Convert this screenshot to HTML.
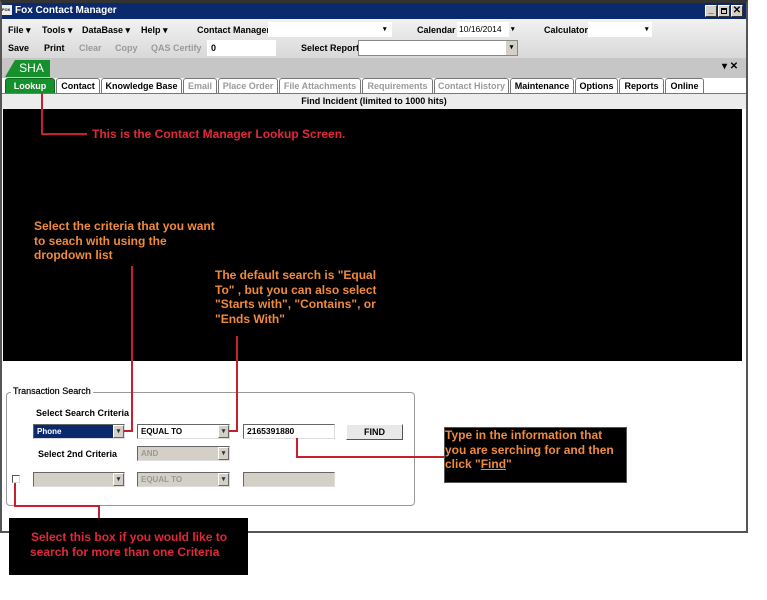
<!DOCTYPE html>
<html><head><meta charset="utf-8"><style>
*{margin:0;padding:0;box-sizing:border-box}
body{width:767px;height:600px;background:#fff;position:relative;overflow:hidden;font-family:"Liberation Sans",Arial,sans-serif;font-weight:bold;font-size:9px;color:#000}
.a{position:absolute}
.t{position:absolute;white-space:nowrap}
.red{background:#c81e2d;position:absolute}
.tab{position:absolute;top:78px;height:15px;border:1px solid #777;border-bottom:none;background:#fff;text-align:center;line-height:14px;font-size:9px;border-radius:3px 3px 0 0}
.dis{color:#9a9a9a}
.dd{position:absolute;height:15px;border:1px solid #666;border-right-color:#ddd;border-bottom-color:#ddd;background:#fff;font-size:8px;line-height:13px;padding-left:3px}
.dd i{position:absolute;right:0;top:0;width:11px;height:13px;background:#d4d0c8;border:1px solid #fff;border-right-color:#666;border-bottom-color:#666;font-style:normal;font-size:7px;line-height:11px;text-align:center;color:#333}
.g{background:#d4d0c8;color:#999}
.ann{position:absolute;color:#f08a3c;font-size:12px;line-height:14.5px;font-weight:bold;white-space:nowrap}
</style></head><body>
<div class="a" style="left:0;top:0;width:748px;height:533px;border:2px solid #555;border-top:3px solid #333;background:#fff"></div>
<div class="a" style="left:2px;top:3px;width:744px;height:16px;background:#0b2a6e"></div>
<div class="a" style="left:2px;top:5px;width:10px;height:10px;background:#eee;font-size:4px;line-height:10px;color:#000">FOX</div>
<div class="t" style="left:15px;top:5px;color:#fff;font-size:10px">Fox Contact Manager</div>
<div class="a" style="left:705px;top:5px;width:12px;height:12px;background:#d4d0c8;border:1px solid #fff;border-right-color:#333;border-bottom-color:#333;font-size:9px;line-height:9px;text-align:center">_</div>
<div class="a" style="left:718px;top:5px;width:12px;height:12px;background:#d4d0c8;border:1px solid #fff;border-right-color:#333;border-bottom-color:#333"><div style="margin:2px;width:6px;height:6px;border:1px solid #000;border-top-width:2px"></div></div>
<div class="a" style="left:731px;top:5px;width:12px;height:12px;background:#d4d0c8;border:1px solid #fff;border-right-color:#333;border-bottom-color:#333;font-size:10px;line-height:10px;text-align:center">✕</div>
<div class="a" style="left:2px;top:19px;width:744px;height:39px;background:linear-gradient(#f2f2f2,#d8d8d8)"></div>
<div class="t" style="left:8px;top:25px">File ▾</div>
<div class="t" style="left:42px;top:25px">Tools ▾</div>
<div class="t" style="left:82px;top:25px">DataBase ▾</div>
<div class="t" style="left:141px;top:25px">Help ▾</div>
<div class="t" style="left:197px;top:25px">Contact Manager</div>
<div class="a" style="left:268px;top:22px;width:124px;height:15px;background:#fff"></div>
<div class="t" style="left:383px;top:25px;font-size:7px">▾</div>
<div class="t" style="left:417px;top:25px">Calendar</div>
<div class="a" style="left:457px;top:22px;width:52px;height:15px;background:#fff;font-weight:normal;font-size:8.5px;line-height:15px;padding-left:2px">10/16/2014</div>
<div class="t" style="left:511px;top:25px;font-size:7px">▾</div>
<div class="t" style="left:544px;top:25px">Calculator</div>
<div class="a" style="left:588px;top:22px;width:64px;height:15px;background:#fff"></div>
<div class="t" style="left:645px;top:25px;font-size:7px">▾</div>
<div class="t" style="left:8px;top:43px">Save</div>
<div class="t" style="left:44px;top:43px">Print</div>
<div class="t dis" style="left:79px;top:43px">Clear</div>
<div class="t dis" style="left:115px;top:43px">Copy</div>
<div class="t dis" style="left:151px;top:43px">QAS Certify</div>
<div class="a" style="left:207px;top:40px;width:69px;height:16px;background:#fff;line-height:16px;padding-left:4px">0</div>
<div class="t" style="left:301px;top:43px">Select Report</div>
<div class="a" style="left:358px;top:40px;width:160px;height:16px;background:#fff;border:1px solid #888"><i style="position:absolute;right:0;top:0;width:11px;height:14px;background:#d4d0c8;font-style:normal;font-size:7px;text-align:center;line-height:14px">▾</i></div>
<div class="a" style="left:2px;top:58px;width:744px;height:20px;background:#c6c6c6"></div>
<div class="a" style="left:5px;top:60px;width:45px;height:17px;background:#15902c;clip-path:polygon(10px 0,100% 0,100% 100%,0 100%);color:#fff;font-size:12px;font-weight:normal;text-align:center;line-height:17px;padding-left:8px">SHA</div>
<div class="t" style="left:722px;top:61px;font-size:10px">▾ ✕</div>
<div class="tab" style="left:5px;width:50px;background:#15902c;color:#fff;border-color:#0c6a1e">Lookup</div>
<div class="tab" style="left:56px;width:44px">Contact</div>
<div class="tab" style="left:101px;width:81px">Knowledge Base</div>
<div class="tab dis" style="left:183px;width:34px">Email</div>
<div class="tab dis" style="left:218px;width:60px">Place Order</div>
<div class="tab dis" style="left:279px;width:82px">File Attachments</div>
<div class="tab dis" style="left:362px;width:71px">Requirements</div>
<div class="tab dis" style="left:434px;width:75px">Contact History</div>
<div class="tab" style="left:510px;width:64px">Maintenance</div>
<div class="tab" style="left:575px;width:43px">Options</div>
<div class="tab" style="left:619px;width:45px">Reports</div>
<div class="tab" style="left:665px;width:39px">Online</div>
<div class="a" style="left:2px;top:93px;width:744px;height:16px;background:#ececec;border-top:1px solid #777;text-align:center;line-height:15px">Find Incident (limited to 1000 hits)</div>
<div class="a" style="left:3px;top:109px;width:739px;height:252px;background:#000"></div>
<div class="red" style="left:41px;top:93px;width:2px;height:42px"></div>
<div class="red" style="left:41px;top:133px;width:46px;height:2px"></div>
<div class="t" style="left:92px;top:127px;color:#e0283a;font-size:12px">This is the Contact Manager Lookup Screen.</div>
<div class="ann" style="left:34px;top:219px">Select the criteria that you want<br>to seach with using the<br>dropdown list</div>
<div class="ann" style="left:215px;top:268px">The default search is "Equal<br>To" , but you can also select<br>"Starts with", "Contains", or<br>"Ends With"</div>
<div class="a" style="left:6px;top:392px;width:409px;height:114px;border:1px solid #999;border-radius:4px"></div>
<div class="t" style="left:11px;top:386px;background:#fff;padding:0 2px;font-weight:normal;font-size:9px;-webkit-text-stroke:0.2px #000">Transaction Search</div>
<div class="t" style="left:36px;top:408px">Select Search Criteria</div>
<div class="dd" style="left:33px;top:424px;width:92px;background:#0b2a6e;color:#fff">Phone<i>▾</i></div>
<div class="dd" style="left:137px;top:424px;width:93px">EQUAL TO<i>▾</i></div>
<div class="dd" style="left:243px;top:424px;width:92px;font-size:8.5px">2165391880</div>
<div class="a" style="left:346px;top:424px;width:57px;height:16px;background:#e8e8e8;border:1px solid #fff;border-right-color:#555;border-bottom-color:#555;text-align:center;line-height:14px;font-size:9px">FIND</div>
<div class="t" style="left:38px;top:449px">Select 2nd Criteria</div>
<div class="dd g" style="left:137px;top:446px;width:93px">AND<i>▾</i></div>
<div class="a" style="left:12px;top:475px;width:8px;height:8px;border:1px solid #555;border-right-color:#ddd;border-bottom-color:#ddd;background:#fff"></div>
<div class="dd g" style="left:33px;top:472px;width:92px"><i>▾</i></div>
<div class="dd g" style="left:137px;top:472px;width:93px">EQUAL TO<i>▾</i></div>
<div class="dd g" style="left:243px;top:472px;width:92px"></div>
<div class="red" style="left:131px;top:266px;width:2px;height:166px"></div>
<div class="red" style="left:124px;top:430px;width:9px;height:2px"></div>
<div class="red" style="left:236px;top:336px;width:2px;height:96px"></div>
<div class="red" style="left:229px;top:430px;width:9px;height:2px"></div>
<div class="red" style="left:296px;top:438px;width:2px;height:20px"></div>
<div class="red" style="left:296px;top:456px;width:148px;height:2px"></div>
<div class="red" style="left:14px;top:483px;width:2px;height:24px"></div>
<div class="red" style="left:14px;top:505px;width:86px;height:2px"></div>
<div class="red" style="left:98px;top:505px;width:2px;height:14px"></div>
<div class="a" style="left:444px;top:427px;width:183px;height:56px;background:#000;border:1px solid #555"></div>
<div class="ann" style="left:445px;top:428px">Type in the information that<br>you are serching for and then<br>click "<u>Find</u>"</div>
<div class="a" style="left:9px;top:518px;width:239px;height:57px;background:#000"></div>
<div class="t" style="left:31px;top:530px;color:#e0283a;font-size:12px;line-height:15px">Select this box if you would like to<br><span style="margin-left:-1px">search for more than one Criteria</span></div>
</body></html>
